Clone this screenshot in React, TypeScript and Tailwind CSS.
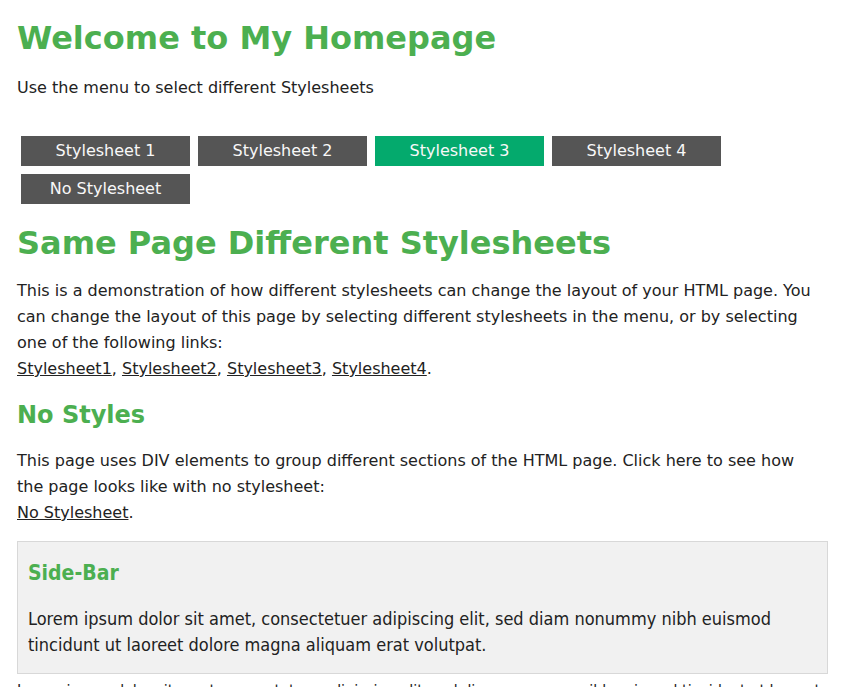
import React from "react";

const btns = ["Stylesheet 1", "Stylesheet 2", "Stylesheet 3", "Stylesheet 4", "No Stylesheet"];
const narrow = { fontFamily: '"Liberation Sans Narrow", "DejaVu Sans Condensed", "DejaVu Sans", sans-serif', fontStretch: "condensed" } as const;

export default function App() {
  return (
    <div className="min-h-[687px] bg-white px-[17px] text-[16px] leading-[26px] text-[#222]" style={{ fontFamily: '"DejaVu Sans", Verdana, sans-serif' }}>
      <h1 className="pt-[18px] text-[32px] font-bold leading-[40px] text-[#4CAF50]">Welcome to My Homepage</h1>
      <p className="mt-[17px]">Use the menu to select different Stylesheets</p>
      <div className="mt-[31px] flex flex-wrap">
        {btns.map((b, i) => (
          <div
            key={b}
            className={`mx-[4px] my-[4px] flex h-[30px] w-[169px] items-center justify-center text-[#f8f8f8] ${i === 2 ? "bg-[#04AA6D]" : "bg-[#555555]"}`}
          >
            {b}
          </div>
        ))}
      </div>
      <h1 className="mt-[15px] text-[32px] font-bold leading-[40px] text-[#4CAF50]">Same Page Different Stylesheets</h1>
      <p className="mt-[15px] pr-[4px]">
        This is a demonstration of how different stylesheets can change the layout of your HTML page. You can change the layout of this page by selecting different stylesheets in the menu, or by selecting one of the following links:
        <br />
        <span className="underline">Stylesheet1</span>, <span className="underline">Stylesheet2</span>, <span className="underline">Stylesheet3</span>, <span className="underline">Stylesheet4</span>.
      </p>
      <h2 className="mt-[18px] text-[24px] font-bold leading-[30px] text-[#4CAF50]">No Styles</h2>
      <p className="mt-[18px] pr-[4px]">
        This page uses DIV elements to group different sections of the HTML page. Click here to see how the page looks like with no stylesheet:
        <br />
        <span className="underline">No Stylesheet</span>.
      </p>
      <div className="mt-[15px] border border-[#d8d8d8] bg-[#f1f1f1] px-[10px] pb-[15px] pt-[17px]">
        <h3 className="text-[21px] font-bold leading-[28px] text-[#4CAF50]" style={narrow}>Side-Bar</h3>
        <p className="mt-[19px] text-[18px]" style={narrow}>
          Lorem ipsum dolor sit amet, consectetuer adipiscing elit, sed diam nonummy nibh euismod tincidunt ut laoreet dolore magna aliquam erat volutpat.
        </p>
      </div>
      <p className="mt-[4px] text-[16px]" style={narrow}>
        Lorem ipsum dolor sit amet, consectetuer adipiscing elit, sed diam nonummy nibh euismod tincidunt ut laoreet dolore magna aliquam erat volutpat.
      </p>
    </div>
  );
}
